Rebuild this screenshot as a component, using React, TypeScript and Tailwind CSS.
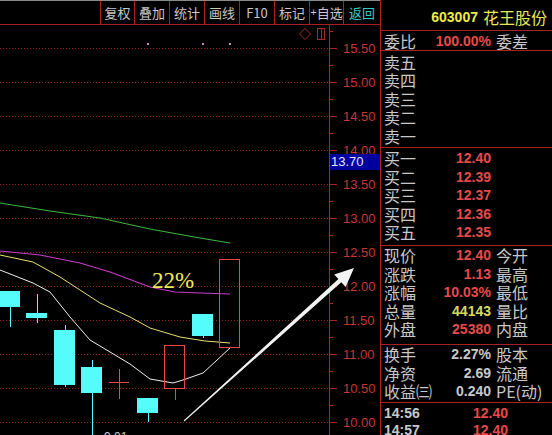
import React from "react";

const cjk = "font-['Noto_Sans_CJK_SC','Liberation_Sans',sans-serif]";
const num = "font-['Liberation_Sans',Arial,sans-serif]";

const tools = [
  { t: "复权", w: "w-[34px]", c: "text-[#c8c8c8]" },
  { t: "叠加", w: "w-[35px]", c: "text-[#c8c8c8]" },
  { t: "统计", w: "w-[35px]", c: "text-[#c8c8c8]" },
  { t: "画线", w: "w-[35px]", c: "text-[#c8c8c8]" },
  { t: "F10", w: "w-[35px]", c: "text-[#c8c8c8]" },
  { t: "标记", w: "w-[35px]", c: "text-[#c8c8c8]" },
  { t: "+自选", w: "w-[34px]", c: "text-[#c8c8c8]" },
  { t: "返回", w: "w-[37px]", c: "text-[#3cc8c8]" },
];

const Toolbar = () => (
  <div className="flex h-[25px] justify-end border-t border-b border-t-[#8a8a8a] border-b-[#a82020]">
    {tools.map((b) => (
      <div
        key={b.t}
        className={`${b.w} ${b.c} ${cjk} flex items-center justify-center whitespace-nowrap border-l border-[#a82020] text-[13px] leading-none`}
      >
        {b.t.startsWith("+") ? (
          <>
            <span className={`${num} text-[11px]`}>+</span>
            {b.t.slice(1)}
          </>
        ) : (
          b.t
        )}
      </div>
    ))}
  </div>
);

// candles: [x1, x2, top, bottom, wickTop, wickBottom, kind]
const candles: [number, number, number, number, number, number, string][] = [
  [0, 20, 291, 307, 291, 327, "cyan"],
  [26, 47, 313, 318, 294, 323, "cyan"],
  [54, 75, 330, 385, 325, 387, "cyan"],
  [81, 102, 367, 393, 360, 436, "cyan"],
  [109, 129, 382, 382, 369, 399, "cross"],
  [137, 158, 398, 413, 398, 422, "cyan"],
  [164, 185, 345, 388, 345, 400, "hollow"],
  [192, 213, 314, 336, 314, 338, "cyan"],
  [219, 240, 259, 347, 259, 347, "hollow"],
];

const Chart = () => {
  const levels = Array.from({ length: 12 }, (_, i) => ({
    y: 48 + 34 * i,
    label: (15.5 - 0.5 * i).toFixed(2),
  }));

  // arrow geometry
  const sx = 184, sy = 421, tx = 354, ty = 268;
  const len = Math.hypot(tx - sx, ty - sy);
  const dx = (tx - sx) / len, dy = (ty - sy) / len;
  const px = -dy, py = dx;
  const bx = tx - dx * 19, by = ty - dy * 19;
  const pt = (x: number, y: number) => `${x.toFixed(1)},${y.toFixed(1)}`;
  const arrow = [
    pt(sx + px * 0.5, sy + py * 0.5),
    pt(bx + px * 2.2, by + py * 2.2),
    pt(bx + px * 8.5, by + py * 8.5),
    pt(tx, ty),
    pt(bx - px * 8.5, by - py * 8.5),
    pt(bx - px * 2.2, by - py * 2.2),
    pt(sx - px * 0.5, sy - py * 0.5),
  ].join(" ");

  return (
    <svg width={380} height={410} viewBox="0 25 380 410" className="block">
      <g shapeRendering="crispEdges">
        {levels.map((l) => (
          <line key={l.label} x1={0} x2={329} y1={l.y + 0.5} y2={l.y + 0.5} stroke="#8c2222" strokeDasharray="1 2" />
        ))}

        {/* axis */}
        <line x1={329.5} x2={329.5} y1={25} y2={435} stroke="#b02424" />
        {levels.map((l) => (
          <g key={"t" + l.label}>
            <line x1={330} x2={337} y1={l.y + 0.5} y2={l.y + 0.5} stroke="#b02424" />
            <line x1={330} x2={333} y1={l.y + 17.5} y2={l.y + 17.5} stroke="#b02424" />
          </g>
        ))}
        <line x1={330} x2={333} y1={31.5} y2={31.5} stroke="#b02424" />

        {/* top markers */}
        {[147, 202, 229].map((x) => (
          <rect key={x} x={x} y={43} width={2} height={2} fill="#c888c8" />
        ))}
        <rect x={317.5} y={28.5} width={7} height={11} fill="none" stroke="#a82a2a" />
        <line x1={321.5} x2={321.5} y1={29} y2={39} stroke="#a82a2a" />
      </g>
      {levels.map((l) => (
        <text key={"l" + l.label} x={343} y={l.y + 5} fill="#c83636" fontSize={13} fontFamily="Liberation Sans, Arial, sans-serif">
          {l.label}
        </text>
      ))}
      <path d="M305 28.5 L310.5 34 L305 39.5 L299.5 34 Z" fill="none" stroke="#a82a2a" />

      {/* moving averages */}
      <polyline fill="none" stroke="#3cb43c" strokeWidth={1.2} points="0,203 50,211 100,218 150,229 200,238 230,243" />
      <polyline fill="none" stroke="#c83cc8" strokeWidth={1.2} points="0,251 40,255 80,263 110,272 150,287 175,292 200,293 230,294" />
      <polyline fill="none" stroke="#e8e070" strokeWidth={1} points="0,255 33,262 60,277 100,303 130,317 150,328 180,337 205,341 230,343" />
      <polyline fill="none" stroke="#f0f0f0" strokeWidth={1} points="0,270 33,283 50,292 70,317 90,340 110,352 130,364 150,379 173,383 183,380 203,373 230,348" />

      {/* candles */}
      <g shapeRendering="crispEdges">
        {candles.map(([x1, x2, t, b, wt, wb, k], i) => {
          const cx = Math.round((x1 + x2) / 2) + 0.5;
          if (k === "cyan")
            return (
              <g key={i}>
                <line x1={cx} x2={cx} y1={wt} y2={wb} stroke="#54fcfc" />
                <rect x={x1} y={t} width={x2 - x1} height={b - t} fill="#54fcfc" />
              </g>
            );
          if (k === "cross")
            return (
              <g key={i}>
                <line x1={cx} x2={cx} y1={wt} y2={wb} stroke="#e84848" />
                <line x1={x1} x2={x2} y1={t + 0.5} y2={t + 0.5} stroke="#e84848" />
              </g>
            );
          return (
            <g key={i}>
              {wb > b && <line x1={cx} x2={cx} y1={b} y2={wb} stroke="#e84848" />}
              <rect x={x1 + 0.5} y={t + 0.5} width={x2 - x1 - 1} height={b - t} fill="none" stroke="#e84848" />
            </g>
          );
        })}
      </g>

      <text x={152} y={288} fill="#f0e858" fontSize={23} fontFamily="Liberation Serif, 'Times New Roman', serif">
        22%
      </text>

      <polygon points={arrow} fill="#f2f2f2" />

      {/* lowest price marker */}
      <line x1={93} x2={98} y1={437.5} y2={437.5} stroke="#c8c8c8" />
      <text x={104} y={441} fill="#c8c8c8" fontSize={12} fontFamily="Liberation Sans, Arial, sans-serif">
        9.01
      </text>

      {/* current price tag */}
      <rect x={330} y={154} width={50} height={16} fill="#0000a0" />
      <text x={331} y={166} fill="#e6e6ff" fontSize={13} fontFamily="Liberation Sans, Arial, sans-serif">
        13.70
      </text>
    </svg>
  );
};

type RowProps = { label: string; value?: string; vc?: string; right?: string };

const Row = ({ label, value, vc, right }: RowProps) => (
  <div className="flex h-[18.5px] items-center pl-[3px] leading-none">
    <div className="flex w-[107px] items-center justify-between">
      <span className={`${cjk} text-[16px] text-[#c8c8c8]`}>{label}</span>
      {value && <span className={`${num} ${vc} text-[14px] font-bold`}>{value}</span>}
    </div>
    {right && <span className={`${cjk} ml-[5px] text-[16px] text-[#c8c8c8]`}>{right}</span>}
  </div>
);

const red = "text-[#e84a4a]";
const gray = "text-[#c8c8c8]";

const Quote = () => (
  <div className="flex h-[435px] w-[172px] flex-col border-l border-[#a82020]">
    <div className="flex h-[31px] shrink-0 items-center justify-end gap-[5px] border-b border-[#a82020] pr-[5px] pt-[4px] leading-none">
      <span className={`${num} text-[14px] font-bold text-[#ecec48]`}>603007</span>
      <span className={`${cjk} text-[16px] text-[#e8e858]`}>花王股份</span>
    </div>
    <div className="flex h-[20px] shrink-0 flex-col justify-center border-b border-[#a82020]">
      <Row label="委比" value="100.00%" vc={red} right="委差" />
    </div>
    <div className="h-[97px] shrink-0 border-b border-[#a82020] pt-[1.5px]">
      <Row label="卖五" />
      <Row label="卖四" />
      <Row label="卖三" />
      <Row label="卖二" />
      <Row label="卖一" />
    </div>
    <div className="h-[98px] shrink-0 border-b border-[#a82020] pt-[1px]">
      <Row label="买一" value="12.40" vc={red} />
      <Row label="买二" value="12.39" vc={red} />
      <Row label="买三" value="12.37" vc={red} />
      <Row label="买四" value="12.36" vc={red} />
      <Row label="买五" value="12.35" vc={red} />
    </div>
    <div className="h-[99px] shrink-0 border-b border-[#a82020]">
      <Row label="现价" value="12.40" vc={red} right="今开" />
      <Row label="涨跌" value="1.13" vc={red} right="最高" />
      <Row label="涨幅" value="10.03%" vc={red} right="最低" />
      <Row label="总量" value="44143" vc="text-[#d8d860]" right="量比" />
      <Row label="外盘" value="25380" vc={red} right="内盘" />
    </div>
    <div className="h-[58px] shrink-0 border-b border-[#a82020]">
      <Row label="换手" value="2.27%" vc={gray} right="股本" />
      <Row label="净资" value="2.69" vc={gray} right="流通" />
      <Row label="收益㈢" value="0.240" vc={gray} right="PE(动)" />
    </div>
    <div className="pl-[3px] pt-[1px] leading-none">
      {["14:56", "14:57"].map((t) => (
        <div key={t} className="flex h-[17.5px] w-[124px] items-center justify-between">
          <span className={`${num} text-[14px] font-bold ${gray}`}>{t}</span>
          <span className={`${num} text-[14px] font-bold ${red}`}>12.40</span>
        </div>
      ))}
    </div>
  </div>
);

export default function App() {
  return (
    <div className="flex h-[435px] w-[552px] overflow-hidden bg-black">
      <div className="flex w-[380px] shrink-0 flex-col">
        <Toolbar />
        <Chart />
      </div>
      <Quote />
    </div>
  );
}
